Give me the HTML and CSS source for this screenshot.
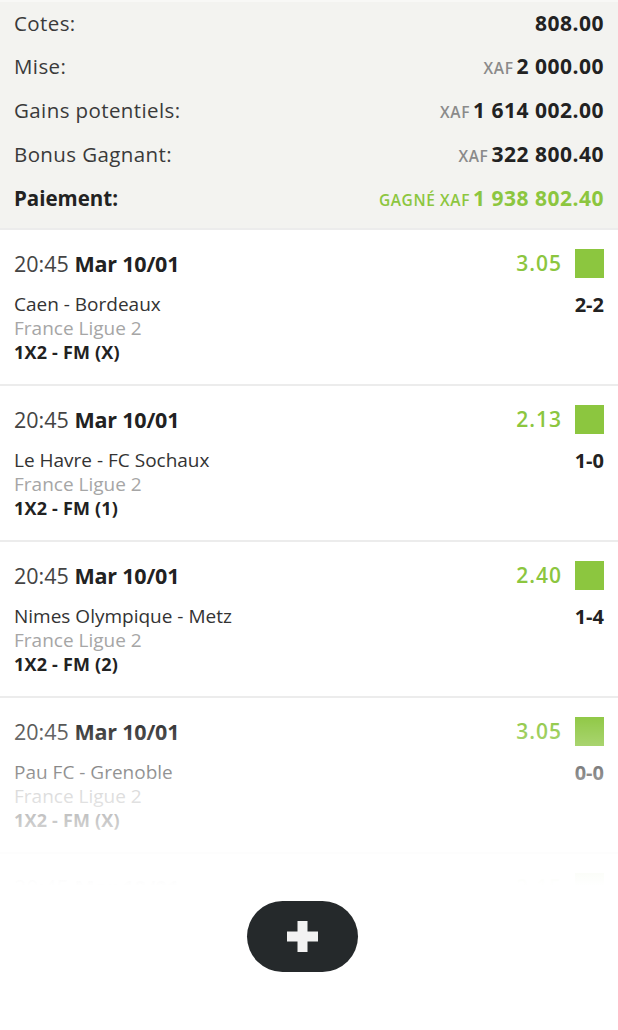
FILE: index.html
```html
<!DOCTYPE html>
<html lang="fr">
<head>
  <meta charset="UTF-8">
  <meta name="viewport" content="width=device-width, initial-scale=1.0">
  <title>Ticket</title>
  <link rel="stylesheet" href="styles.css">
</head>
<body>

  <div class="summary">
    <div class="sum-row">
      <span class="sum-label">Cotes:</span>
      <span class="sum-value"><b>808.00</b></span>
    </div>
    <div class="sum-row">
      <span class="sum-label">Mise:</span>
      <span class="sum-value"><small>XAF</small><b>2 000.00</b></span>
    </div>
    <div class="sum-row">
      <span class="sum-label">Gains potentiels:</span>
      <span class="sum-value"><small>XAF</small><b>1 614 002.00</b></span>
    </div>
    <div class="sum-row">
      <span class="sum-label">Bonus Gagnant:</span>
      <span class="sum-value"><small>XAF</small><b>322 800.40</b></span>
    </div>
    <div class="sum-row">
      <span class="sum-label strong">Paiement:</span>
      <span class="sum-value won"><small>GAGNÉ XAF</small><b>1 938 802.40</b></span>
    </div>
  </div>

  <div class="matches">
    <div class="match">
      <div class="match-top">
        <span class="match-time">20:45 <b>Mar 10/01</b></span>
        <span class="match-odd">3.05 <i class="status"></i></span>
      </div>
      <div class="match-mid">
        <span class="teams">Caen - Bordeaux</span>
        <span class="score">2-2</span>
      </div>
      <div class="league">France Ligue 2</div>
      <div class="market">1X2 - FM (X)</div>
    </div>

    <div class="match">
      <div class="match-top">
        <span class="match-time">20:45 <b>Mar 10/01</b></span>
        <span class="match-odd">2.13 <i class="status"></i></span>
      </div>
      <div class="match-mid">
        <span class="teams">Le Havre - FC Sochaux</span>
        <span class="score">1-0</span>
      </div>
      <div class="league">France Ligue 2</div>
      <div class="market">1X2 - FM (1)</div>
    </div>

    <div class="match">
      <div class="match-top">
        <span class="match-time">20:45 <b>Mar 10/01</b></span>
        <span class="match-odd">2.40 <i class="status"></i></span>
      </div>
      <div class="match-mid">
        <span class="teams">Nimes Olympique - Metz</span>
        <span class="score">1-4</span>
      </div>
      <div class="league">France Ligue 2</div>
      <div class="market">1X2 - FM (2)</div>
    </div>

    <div class="match">
      <div class="match-top">
        <span class="match-time">20:45 <b>Mar 10/01</b></span>
        <span class="match-odd">3.05 <i class="status"></i></span>
      </div>
      <div class="match-mid">
        <span class="teams">Pau FC - Grenoble</span>
        <span class="score">0-0</span>
      </div>
      <div class="league">France Ligue 2</div>
      <div class="market">1X2 - FM (X)</div>
    </div>

    <div class="match">
      <div class="match-top">
        <span class="match-time">20:45 <b>Mar 10/01</b></span>
        <span class="match-odd">2.15 <i class="status"></i></span>
      </div>
    </div>

    <div class="fade"></div>
  </div>

  <div class="more">
    <button class="more-btn" aria-label="Plus">
      <svg width="31" height="31" viewBox="0 0 31 31">
        <path d="M10.5 0h10v10.5H31v10H20.5V31h-10V20.5H0v-10h10.5z" fill="#f2f2f2"/>
      </svg>
    </button>
  </div>

</body>
</html>
```

FILE: styles.css
```css
body {
  margin: 0;
  padding: 0;
  background: #fff;
  font-family: 'Open Sans', 'Liberation Sans', sans-serif;
  color: #333;
}

.summary {
  background: #f3f3f0;
  border-top: 2px solid #f8f8f6;
  padding: 0 14px 8px;
}

.sum-row {
  display: flex;
  justify-content: space-between;
  align-items: center;
  height: 44px;
}

.sum-row:first-child {
  height: 42px;
}

.sum-label {
  font-size: 20.5px;
  color: #3a3a3a;
  letter-spacing: 0.4px;
}

.sum-label.strong {
  font-weight: bold;
  color: #222;
  letter-spacing: 0;
}

.sum-value {
  display: flex;
  align-items: baseline;
  gap: 3px;
}

.sum-value small {
  font-size: 15.5px;
  font-weight: 600;
  color: #8a8a8a;
  letter-spacing: 0.6px;
}

.sum-value b {
  font-size: 21px;
  color: #222;
  letter-spacing: 0.5px;
}

.sum-value.won small,
.sum-value.won b {
  color: #8cc63f;
}

.matches {
  position: relative;
  height: 658px;
  overflow: hidden;
}

.match {
  border-top: 2px solid #ececec;
  height: 154px;
  padding: 0 14px;
}

.match-top {
  display: flex;
  justify-content: space-between;
  align-items: center;
  height: 66px;
}

.match-time {
  font-size: 21.5px;
  color: #444;
}

.match-time b {
  color: #222;
  letter-spacing: -0.2px;
}

.match-odd {
  display: flex;
  align-items: center;
  gap: 13px;
  font-size: 21px;
  font-weight: 600;
  color: #8cc63f;
  letter-spacing: 1px;
}

.status {
  display: block;
  width: 29px;
  height: 29px;
  background: #8cc63f;
}

.match-mid {
  display: flex;
  justify-content: space-between;
  align-items: center;
  height: 24px;
  margin-top: -4px;
}

.teams {
  font-size: 19px;
  color: #333;
}

.score {
  font-size: 20px;
  font-weight: bold;
  color: #222;
}

.league {
  font-size: 19px;
  color: #a6a6a6;
  line-height: 24px;
}

.market {
  font-size: 18px;
  font-weight: bold;
  color: #222;
  line-height: 24px;
  letter-spacing: 0.2px;
}

.fade {
  position: absolute;
  left: 0;
  right: 0;
  bottom: 0;
  height: 175px;
  background: linear-gradient(to bottom, rgba(255, 255, 255, 0) 0%, rgba(255, 255, 255, 0.25) 20%, rgba(255, 255, 255, 0.6) 45%, rgba(255, 255, 255, 0.8) 68%, rgba(255, 255, 255, 0.95) 88%, #fff 100%);
}

.more {
  display: flex;
  justify-content: center;
  padding-top: 15px;
  padding-right: 13px;
}

.more-btn {
  width: 111px;
  height: 71px;
  border: none;
  border-radius: 36px;
  background: #25292b;
  display: flex;
  align-items: center;
  justify-content: center;
  cursor: pointer;
}
```
